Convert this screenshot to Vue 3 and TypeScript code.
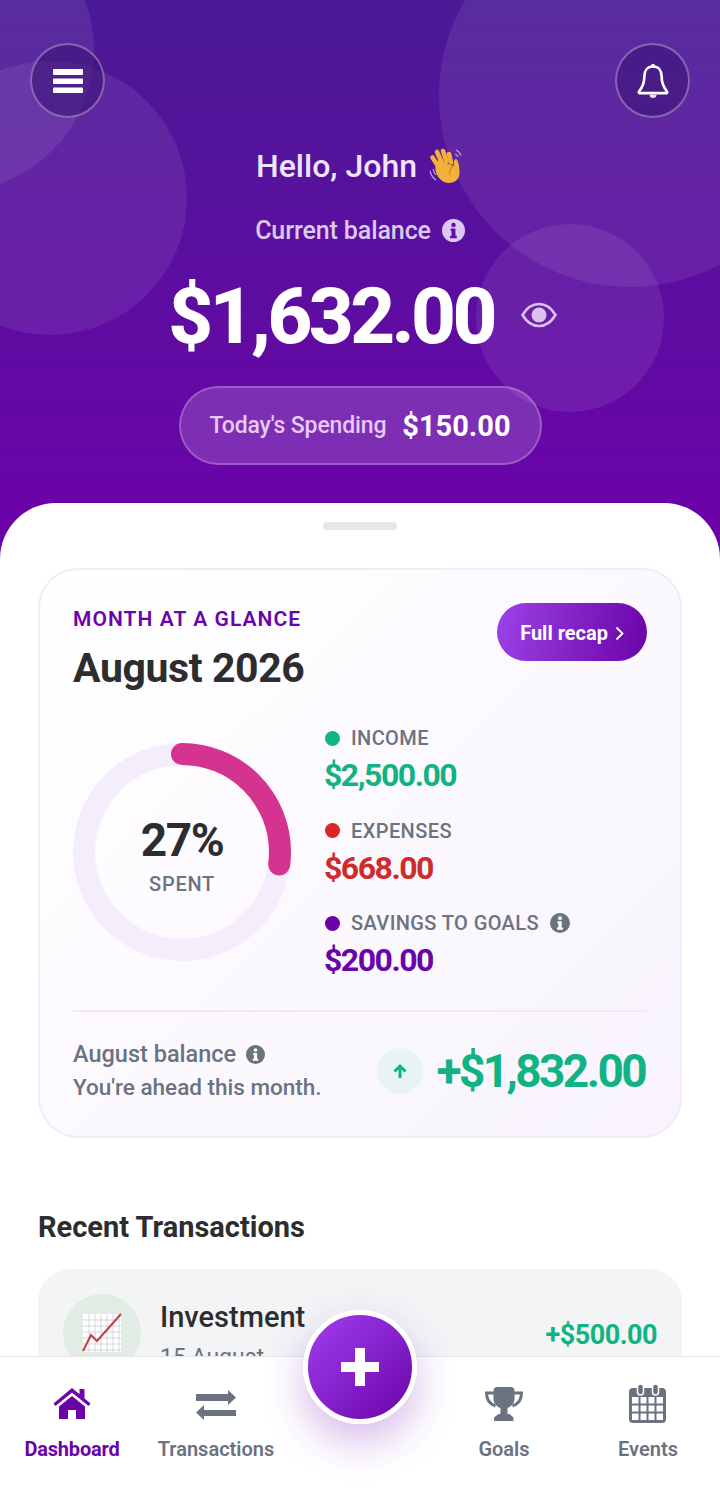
<template>
  <div class="page">
    <section class="hero">
      <span class="blob blob-a"></span>
      <span class="blob blob-b"></span>
      <span class="blob blob-c"></span>
      <span class="blob blob-d"></span>

      <div class="top-bar">
        <button class="round-btn">
          <svg width="30" height="24" viewBox="0 0 30 24">
            <rect x="0" y="0" width="30" height="6" rx="1" fill="#fff" />
            <rect x="0" y="9.500" width="30" height="5.500" rx="1" fill="#fff" />
            <rect x="0" y="18.500" width="30" height="5.500" rx="1" fill="#fff" />
          </svg>
        </button>
        <button class="round-btn">
          <svg width="34" height="36" viewBox="0 0 34 36" fill="none">
            <path
              d="M17 3.500c-5.600 0-8.600 4.200-8.600 9.600 0 7.400-1.600 11-5.400 15.400-.6.800-.1 1.600.8 1.600h26.400c.9 0 1.400-.8.8-1.600-3.800-4.400-5.400-8-5.400-15.400 0-5.400-3-9.600-8.600-9.600z"
              stroke="#fff"
              stroke-width="2.600"
              stroke-linejoin="round"
            />
            <circle cx="17" cy="2.600" r="1.800" fill="#fff" />
            <path d="M13.500 31.500a3.500 3.500 0 0 0 7 0z" fill="#e9dcf7" />
          </svg>
        </button>
      </div>

      <h1 class="greeting">
        Hello, John
        <svg class="wave" width="36" height="36" viewBox="0 0 36 36">
          <path d="M2 23c1 4 3 7 6 9M5 21c.5 2 1.400 4 3 6" stroke="#b9a6e0" stroke-width="1.200" fill="none" />
          <path d="M28 2c2.500 1 4 3 5 5.500M27 6c1.500.5 2.500 1.500 3 3" stroke="#b9a6e0" stroke-width="1.200" fill="none" />
          <g stroke="#f3b13b" stroke-width="4.600" stroke-linecap="round">
            <path d="M10 18 4.500 9.500" />
            <path d="M14 15 9 4" />
            <path d="M18.500 13.500 15 3" />
            <path d="M23 14.500 21 6" />
          </g>
          <path
            d="M8 16c-1.500 5 0 10 3 14 3 4 9 6 13.500 4.500 5-1.500 7-5.500 7-10 0-4-.5-8-2-12-.7-2-3.300-1.800-3.500.5l-.5 5-15-6z"
            fill="#f3b13b"
          />
          <path d="M26 18c-3.500 1.500-5 5-4 9" stroke="#c98a1e" stroke-width="1.200" fill="none" />
        </svg>
      </h1>

      <div class="balance-label">
        Current balance
        <svg width="23" height="23" viewBox="0 0 24 24">
          <circle cx="12" cy="12" r="12" fill="#dcc8f0" />
          <circle cx="12" cy="6.300" r="2.300" fill="#5a10a4" />
          <path d="M9 10h5v7.500h1.500V20h-7v-2.500H10V12.500H9z" fill="#5a10a4" />
        </svg>
      </div>

      <div class="balance-row">
        <span class="balance">$1,632.00</span>
        <svg class="eye" width="36" height="26" viewBox="0 0 36 26" fill="none">
          <path d="M1.500 13C6 5.500 11.500 2 18 2s12 3.500 16.500 11C30 20.500 24.500 24 18 24S6 20.500 1.500 13z" stroke="#d9c3ee" stroke-width="2.600" />
          <circle cx="18" cy="13" r="7.500" fill="#d9c3ee" />
        </svg>
      </div>

      <div class="spend-pill">
        <span class="spend-label">Today's Spending</span>
        <span class="spend-value">$150.00</span>
      </div>
    </section>

    <section class="sheet">
      <div class="handle"></div>

      <div class="glance">
        <div class="glance-head">
          <div>
            <div class="eyebrow">MONTH AT A GLANCE</div>
            <div class="month">August 2026</div>
          </div>
          <button class="recap">
            Full recap
            <svg width="9" height="15" viewBox="0 0 9 15" fill="none">
              <path d="M1.500 1.500 7.500 7.500 1.500 13.500" stroke="#fff" stroke-width="1.800" />
            </svg>
          </button>
        </div>

        <div class="glance-body">
          <div class="donut">
            <svg width="218" height="218" viewBox="0 0 218 218" fill="none">
              <circle cx="109" cy="109" :r="radius" stroke="#f4edfb" stroke-width="22" />
              <circle
                cx="109"
                cy="109"
                :r="radius"
                stroke="#d4338f"
                stroke-width="22"
                stroke-linecap="round"
                :stroke-dasharray="dash"
                transform="rotate(-90 109 109)"
              />
            </svg>
            <div class="donut-text">
              <div class="pct">{{ spent }}%</div>
              <div class="pct-label">SPENT</div>
            </div>
          </div>

          <ul class="legend">
            <li v-for="item in legend" :key="item.label">
              <div class="legend-label">
                <i class="dot" :style="{ background: item.dot }"></i>
                {{ item.label }}
                <svg v-if="item.info" class="legend-info" width="20" height="20" viewBox="0 0 24 24">
                  <circle cx="12" cy="12" r="12" fill="#6b7280" />
                  <circle cx="12" cy="6.300" r="2.300" fill="#fff" />
                  <path d="M9 10h5v7.500h1.500V20h-7v-2.500H10V12.500H9z" fill="#fff" />
                </svg>
              </div>
              <div class="legend-value" :style="{ color: item.color }">{{ item.value }}</div>
            </li>
          </ul>
        </div>

        <div class="glance-foot">
          <div class="foot-text">
            <div class="foot-title">
              August balance
              <svg width="19" height="19" viewBox="0 0 24 24">
                <circle cx="12" cy="12" r="12" fill="#6b7280" />
                <circle cx="12" cy="6.300" r="2.300" fill="#fff" />
                <path d="M9 10h5v7.500h1.500V20h-7v-2.500H10V12.500H9z" fill="#fff" />
              </svg>
            </div>
            <div class="foot-sub">You're ahead this month.</div>
          </div>
          <div class="foot-amount">
            <span class="up-badge">
              <svg width="16" height="16" viewBox="0 0 16 16" fill="none">
                <path d="M8 15V3M2.500 8.500 8 3l5.500 5.500" stroke="#12b383" stroke-width="3" />
              </svg>
            </span>
            <span class="ahead">+$1,832.00</span>
          </div>
        </div>
      </div>

      <h2 class="recent-title">Recent Transactions</h2>

      <div class="tx-row">
        <span class="tx-icon">
          <svg width="40" height="40" viewBox="0 0 40 40" fill="none">
            <rect x="1" y="1" width="38" height="38" fill="#fff" />
            <path
              d="M1 7h38M1 13h38M1 19h38M1 25h38M1 31h38M1 37h38M7 1v38M13 1v38M19 1v38M25 1v38M31 1v38M37 1v38"
              stroke="#c9ccd6"
              stroke-width=".8"
            />
            <path d="M1 38 9 22l6 6L39 1" stroke="#c5403c" stroke-width="2" />
          </svg>
        </span>
        <div class="tx-info">
          <div class="tx-name">Investment</div>
          <div class="tx-date">15 August</div>
        </div>
        <div class="tx-amount">+$500.00</div>
      </div>
    </section>

    <nav class="tabs">
      <a v-for="tab in tabs" :key="tab.label" class="tab" :class="{ active: tab.active }">
        <svg v-if="tab.label" class="tab-icon" width="44" height="44" viewBox="0 0 44 44" v-html="tab.icon"></svg>
        <span v-if="tab.label">{{ tab.label }}</span>
      </a>
      <button class="fab">
        <svg width="40" height="40" viewBox="0 0 40 40">
          <path d="M15 1h10v14h14v10H25v14H15V25H1V15h14z" fill="#fff" />
        </svg>
      </button>
    </nav>
  </div>
</template>

<script setup lang="ts">
interface LegendItem {
  label: string;
  value: string;
  dot: string;
  color: string;
  info?: boolean;
}

interface Tab {
  label: string;
  icon: string;
  active?: boolean;
}

const spent = 27;
const radius = 98;
const circumference = 2 * Math.PI * radius;
const dash = `${(circumference * spent) / 100} ${circumference}`;

const legend: LegendItem[] = [
  { label: 'INCOME', value: '$2,500.00', dot: '#12b383', color: '#12b383' },
  { label: 'EXPENSES', value: '$668.00', dot: '#dc2626', color: '#d02b2b' },
  { label: 'SAVINGS TO GOALS', value: '$200.00', dot: '#6a04a8', color: '#6a04a8', info: true },
];

const grey = '#6b7280';
const purple = '#6a04a8';

const tabs: Tab[] = [
  {
    label: 'Dashboard',
    active: true,
    icon: `<path d="M22 5 3.500 20.500l2 2.500L22 9.500 38.500 23l2-2.500-6-5V6h-5v5.300z" fill="${purple}"/><path d="M22 13 9 23.500V36h9V27h8v9h9V23.500z" fill="${purple}"/>`,
  },
  {
    label: 'Transactions',
    icon: `<path d="M2 11h32V7l8 7.500-8 7.500v-4H2z" fill="${grey}"/><path d="M42 27H10v-5l-8 7.500L10 37v-4h32z" fill="${grey}"/>`,
  },
  { label: '', icon: '' },
  {
    label: 'Goals',
    icon: `<path d="M15 4h14c2 0 3.500 1.500 3.500 3.500V16c0 5-4 8-7 9v6h2l4 3.500V38H12v-3.500L16.500 31h2v-6c-3-1-7-4-7-9V7.500C11.500 5.500 13 4 15 4z" fill="${grey}"/><path d="M12 10H4.500c0 7 3 11 9 13M32 10h7.500c0 7-3 11-9 13" fill="none" stroke="${grey}" stroke-width="3"/>`,
  },
  {
    label: 'Events',
    icon: `<rect x="3" y="5" width="37" height="35" rx="4" fill="${grey}"/><rect x="11.500" y="1" width="6" height="11" rx="3" fill="${grey}" stroke="#fff" stroke-width="1.500"/><rect x="26.500" y="1" width="6" height="11" rx="3" fill="${grey}" stroke="#fff" stroke-width="1.500"/><rect x="6" y="14" width="31" height="23" fill="#fff"/><path d="M6 21.500h31M6 29.500h31M13.500 14v23M21.500 14v23M29.500 14v23" stroke="${grey}" stroke-width="2"/>`,
  },
];
</script>

<style scoped>
.page {
  position: relative;
  width: 720px;
  height: 1492px;
  overflow: hidden;
  background: #fff;
  font-family: Roboto, "Liberation Sans", sans-serif;
}

.hero {
  position: relative;
  height: 570px;
  padding-top: 43px;
  box-sizing: border-box;
  overflow: hidden;
  background: linear-gradient(180deg, #4a1a96 0%, #6a04a8 88%);
  text-align: center;
}

.blob {
  position: absolute;
  border-radius: 50%;
  background: rgba(255, 255, 255, 0.08);
}

.blob-a {
  left: -190px;
  top: -92px;
  width: 284px;
  height: 284px;
}

.blob-b {
  left: -87px;
  top: 61px;
  width: 274px;
  height: 274px;
}

.blob-c {
  left: 439px;
  top: -95px;
  width: 382px;
  height: 382px;
}

.blob-d {
  left: 476px;
  top: 224px;
  width: 188px;
  height: 188px;
}

.top-bar {
  position: relative;
  display: flex;
  justify-content: space-between;
  padding: 0 30px;
}

.round-btn {
  display: flex;
  align-items: center;
  justify-content: center;
  width: 75px;
  height: 75px;
  padding: 0;
  border: 2px solid rgba(255, 255, 255, 0.32);
  border-radius: 50%;
  background: rgba(60, 20, 120, 0.6);
}

.greeting {
  position: relative;
  display: flex;
  align-items: center;
  justify-content: center;
  gap: 11px;
  margin: 28px 0 0;
  height: 40px;
  font-size: 32px;
  font-weight: 500;
  line-height: 40px;
  color: #efe4fa;
}

.balance-label {
  position: relative;
  display: flex;
  align-items: center;
  justify-content: center;
  gap: 11px;
  margin-top: 28px;
  height: 32px;
  font-size: 25px;
  font-weight: 500;
  letter-spacing: -0.1px;
  color: #dcc8f0;
}

.balance-row {
  position: relative;
  display: flex;
  align-items: center;
  justify-content: center;
  gap: 27px;
  margin-top: 26px;
  margin-left: 5px;
  height: 90px;
}

.balance {
  font-size: 78px;
  font-weight: 800;
  line-height: 90px;
  letter-spacing: -3.6px;
  color: #fff;
}

.eye {
  margin-top: -4px;
}

.spend-pill {
  position: relative;
  display: flex;
  align-items: center;
  justify-content: center;
  gap: 16px;
  width: 363px;
  height: 79px;
  margin: 24px auto 0;
  box-sizing: border-box;
  border: 2px solid rgba(255, 255, 255, 0.22);
  border-radius: 40px;
  background: rgba(255, 255, 255, 0.16);
}

.spend-label {
  font-size: 23px;
  font-weight: 500;
  letter-spacing: -0.15px;
  color: #e6c9f6;
}

.spend-value {
  font-size: 29px;
  font-weight: 700;
  color: #fff;
}

.sheet {
  position: relative;
  margin-top: -67px;
  padding: 19px 38px 0;
  border-radius: 56px 56px 0 0;
  background: #fff;
}

.handle {
  width: 74px;
  height: 8px;
  margin: 0 auto 38px;
  border-radius: 4px;
  background: #e5e7eb;
}

.glance {
  box-sizing: border-box;
  height: 570px;
  padding: 33px 33px 0;
  border: 2px solid #f2ecf9;
  border-radius: 40px;
  background: linear-gradient(135deg, #ffffff 0%, #f8f3fd 100%);
}

.glance-head {
  display: flex;
  justify-content: space-between;
  align-items: flex-start;
}

.eyebrow {
  margin-top: 3px;
  font-size: 21px;
  font-weight: 600;
  line-height: 26px;
  letter-spacing: 1.05px;
  color: #6a04a8;
}

.month {
  margin-top: 11px;
  font-size: 41px;
  font-weight: 700;
  line-height: 50px;
  letter-spacing: -0.4px;
  color: #2d2d30;
}

.recap {
  display: flex;
  align-items: center;
  gap: 7px;
  height: 58px;
  padding: 2px 23px 0;
  border: 0;
  border-radius: 29px;
  background: linear-gradient(100deg, #9b42e6 0%, #6a04a8 100%);
  font-family: inherit;
  font-size: 20px;
  font-weight: 700;
  color: #fff;
}

.glance-body {
  display: flex;
  gap: 34px;
  margin-top: 31px;
}

.donut {
  position: relative;
  flex-shrink: 0;
  width: 218px;
  height: 218px;
  margin-top: 19px;
}

.donut-text {
  position: absolute;
  inset: 0;
  padding-top: 4px;
  display: flex;
  flex-direction: column;
  align-items: center;
  justify-content: center;
}

.pct {
  font-size: 46px;
  font-weight: 700;
  line-height: 54px;
  letter-spacing: -1.5px;
  color: #2d2d30;
}

.pct-label {
  margin-top: 5px;
  font-size: 20px;
  font-weight: 500;
  line-height: 24px;
  letter-spacing: 0.7px;
  color: #6b7280;
}

.legend {
  margin: 0;
  padding: 0;
  list-style: none;
}

.legend li {
  height: 92.5px;
}

.legend-label {
  display: flex;
  align-items: center;
  height: 28px;
  font-size: 20px;
  font-weight: 500;
  letter-spacing: 0.4px;
  color: #6b7280;
}

.dot {
  flex-shrink: 0;
  width: 15px;
  height: 15px;
  margin-right: 11px;
  border-radius: 50%;
}

.legend-info {
  margin-left: 11px;
}

.legend-value {
  margin-left: -1px;
  font-size: 32px;
  font-weight: 700;
  line-height: 46px;
  letter-spacing: -1.5px;
}

.glance-foot {
  display: flex;
  align-items: center;
  justify-content: space-between;
  margin-top: 8px;
  padding-top: 26px;
  border-top: 2px solid #f1eaf6;
}

.foot-text {
  font-weight: 500;
  line-height: 33px;
  color: #6b7280;
}

.foot-title {
  font-size: 23.500px;
}

.foot-sub {
  font-size: 22.500px;
}

.foot-text svg {
  margin-left: 4px;
  vertical-align: -2px;
}

.foot-amount {
  display: flex;
  align-items: center;
  gap: 14px;
  margin-right: 2px;
}

.up-badge {
  display: flex;
  align-items: center;
  justify-content: center;
  width: 46px;
  height: 46px;
  border-radius: 50%;
  background: #e8f4f4;
}

.ahead {
  font-size: 46px;
  font-weight: 700;
  letter-spacing: -2.6px;
  color: #12b383;
}

.recent-title {
  margin: 70px 0 0;
  font-size: 29px;
  font-weight: 700;
  line-height: 38px;
  color: #2d2d30;
}

.tx-row {
  display: flex;
  align-items: flex-start;
  height: 150px;
  margin-top: 23px;
  padding: 25px 25px 0;
  box-sizing: border-box;
  border-radius: 32px;
  background: #f3f4f6;
}

.tx-icon {
  display: flex;
  align-items: center;
  justify-content: center;
  width: 78px;
  height: 78px;
  border-radius: 50%;
  background: #e0ece4;
}

.tx-info {
  flex: 1;
  margin-left: 19px;
}

.tx-name {
  font-size: 29px;
  font-weight: 500;
  line-height: 46px;
  color: #2d2d30;
}

.tx-date {
  margin-top: 4px;
  font-size: 23px;
  line-height: 28px;
  color: #6b7280;
}

.tx-amount {
  margin-top: 24px;
  font-size: 27px;
  font-weight: 700;
  line-height: 34px;
  letter-spacing: -0.5px;
  color: #12b383;
}

.tabs {
  position: absolute;
  left: 0;
  right: 0;
  bottom: 0;
  display: flex;
  height: 136px;
  box-sizing: border-box;
  border-top: 1px solid #e5e7eb;
  background: #fff;
}

.tab {
  flex: 1;
  display: flex;
  flex-direction: column;
  align-items: center;
  padding-top: 26px;
  font-size: 20px;
  font-weight: 600;
  color: #6b7280;
}

.tab.active {
  font-weight: 700;
  letter-spacing: -0.2px;
  color: #6a04a8;
}

.tab span {
  margin-top: 9px;
  line-height: 26px;
}

.fab {
  position: absolute;
  left: 303px;
  top: -47px;
  display: flex;
  align-items: center;
  justify-content: center;
  width: 114px;
  height: 114px;
  padding: 0;
  box-sizing: border-box;
  border: 5px solid #fff;
  border-radius: 50%;
  background: linear-gradient(135deg, #a03ff0 0%, #6a04a8 100%);
  box-shadow: 0 18px 40px rgba(122, 30, 190, 0.3);
}
</style>
